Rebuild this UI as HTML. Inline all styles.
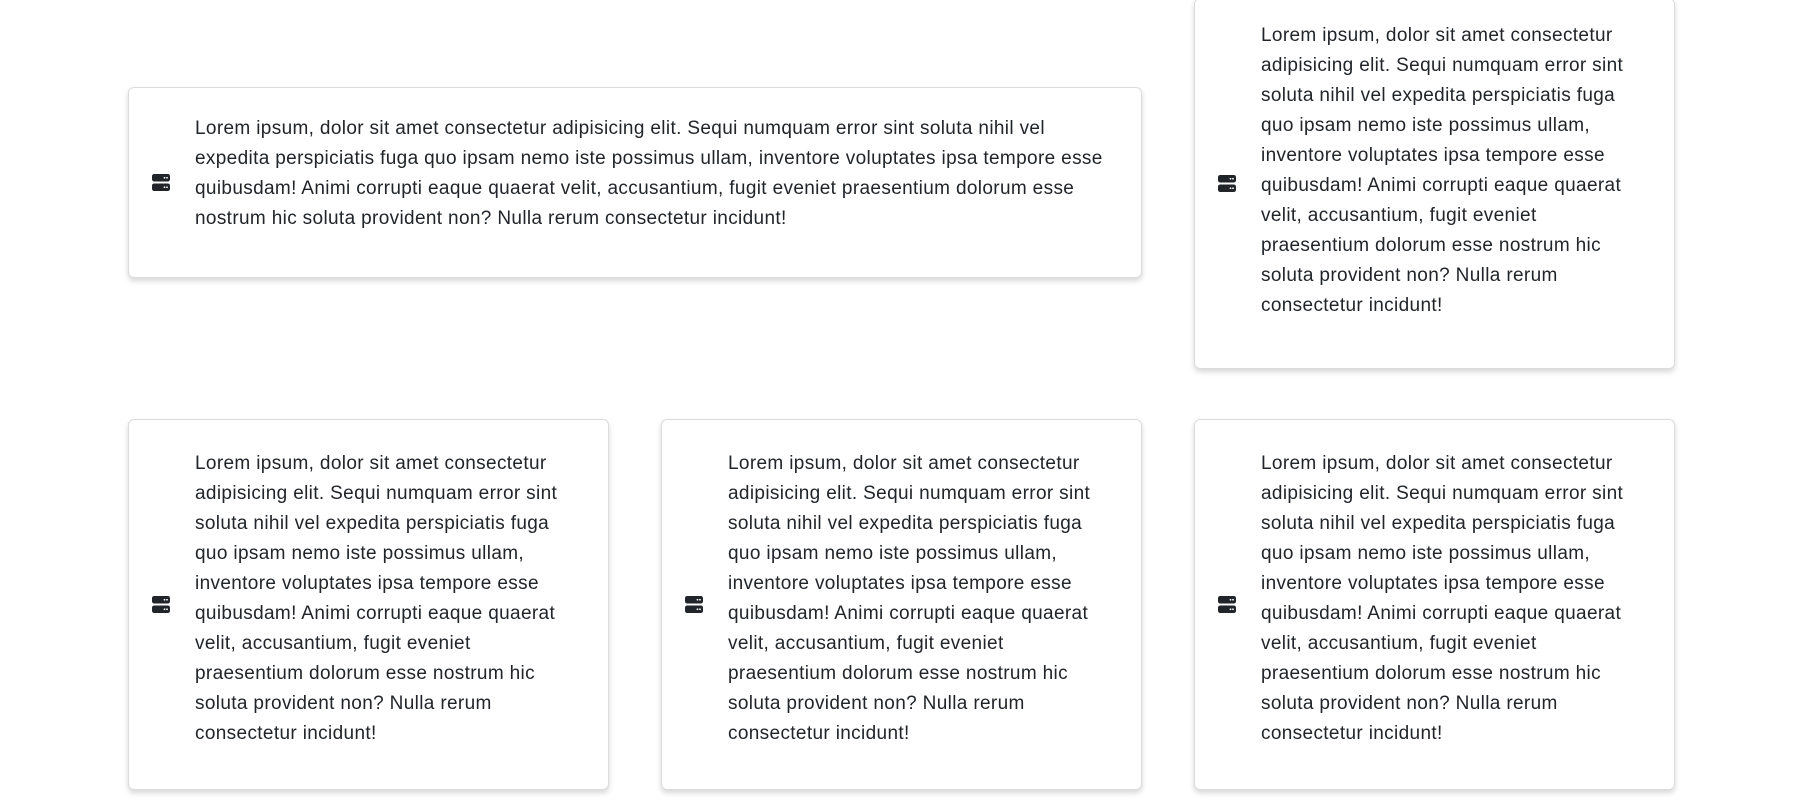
<!DOCTYPE html>
<html><head><meta charset="utf-8"><style>
html,body{margin:0;padding:0;background:#fff;width:1810px;height:811px;overflow:hidden}
.card{position:absolute;background:#fff;border:1px solid #dcdcdc;border-radius:6px;box-shadow:0 3px 6px rgba(0,0,0,.16);box-sizing:border-box}
.ic{position:absolute;left:23px;top:50%;margin-top:-9px;width:18px;height:17px}
.tx{position:absolute;left:66px;font-family:"Liberation Sans",sans-serif;font-size:19px;letter-spacing:0.35px;line-height:30px;color:#212529;white-space:nowrap}
</style></head><body>

<svg width="0" height="0" style="position:absolute"><defs>
<symbol id="srv" viewBox="0 0 18 17">
<rect x="0" y="0" width="18" height="7.5" rx="2.2" fill="#212529"/>
<rect x="0" y="9.5" width="18" height="7.5" rx="2.2" fill="#212529"/>
<circle cx="12.5" cy="3.75" r=".9" fill="#fff"/><circle cx="15" cy="3.75" r=".9" fill="#fff"/>
<circle cx="12.5" cy="13.25" r=".9" fill="#fff"/><circle cx="15" cy="13.25" r=".9" fill="#fff"/>
</symbol></defs></svg>

<div class="card" style="left:128px;top:87px;width:1014px;height:191px">
<svg class="ic"><use href="#srv"/></svg>
<div class="tx" style="top:26px">Lorem ipsum, dolor sit amet consectetur adipisicing elit. Sequi numquam error sint soluta nihil vel<br>expedita perspiciatis fuga quo ipsam nemo iste possimus ullam, inventore voluptates ipsa tempore esse<br>quibusdam! Animi corrupti eaque quaerat velit, accusantium, fugit eveniet praesentium dolorum esse<br>nostrum hic soluta provident non? Nulla rerum consectetur incidunt!</div>
</div>

<div class="card" style="left:1194px;top:-2px;width:481px;height:371px">
<svg class="ic"><use href="#srv"/></svg>
<div class="tx" style="top:22px">Lorem ipsum, dolor sit amet consectetur<br>adipisicing elit. Sequi numquam error sint<br>soluta nihil vel expedita perspiciatis fuga<br>quo ipsam nemo iste possimus ullam,<br>inventore voluptates ipsa tempore esse<br>quibusdam! Animi corrupti eaque quaerat<br>velit, accusantium, fugit eveniet<br>praesentium dolorum esse nostrum hic<br>soluta provident non? Nulla rerum<br>consectetur incidunt!</div>
</div>

<div class="card" style="left:128px;top:419px;width:481px;height:371px">
<svg class="ic"><use href="#srv"/></svg>
<div class="tx" style="top:29px">Lorem ipsum, dolor sit amet consectetur<br>adipisicing elit. Sequi numquam error sint<br>soluta nihil vel expedita perspiciatis fuga<br>quo ipsam nemo iste possimus ullam,<br>inventore voluptates ipsa tempore esse<br>quibusdam! Animi corrupti eaque quaerat<br>velit, accusantium, fugit eveniet<br>praesentium dolorum esse nostrum hic<br>soluta provident non? Nulla rerum<br>consectetur incidunt!</div>
</div>

<div class="card" style="left:661px;top:419px;width:481px;height:371px">
<svg class="ic"><use href="#srv"/></svg>
<div class="tx" style="top:29px">Lorem ipsum, dolor sit amet consectetur<br>adipisicing elit. Sequi numquam error sint<br>soluta nihil vel expedita perspiciatis fuga<br>quo ipsam nemo iste possimus ullam,<br>inventore voluptates ipsa tempore esse<br>quibusdam! Animi corrupti eaque quaerat<br>velit, accusantium, fugit eveniet<br>praesentium dolorum esse nostrum hic<br>soluta provident non? Nulla rerum<br>consectetur incidunt!</div>
</div>

<div class="card" style="left:1194px;top:419px;width:481px;height:371px">
<svg class="ic"><use href="#srv"/></svg>
<div class="tx" style="top:29px">Lorem ipsum, dolor sit amet consectetur<br>adipisicing elit. Sequi numquam error sint<br>soluta nihil vel expedita perspiciatis fuga<br>quo ipsam nemo iste possimus ullam,<br>inventore voluptates ipsa tempore esse<br>quibusdam! Animi corrupti eaque quaerat<br>velit, accusantium, fugit eveniet<br>praesentium dolorum esse nostrum hic<br>soluta provident non? Nulla rerum<br>consectetur incidunt!</div>
</div>

</body></html>
